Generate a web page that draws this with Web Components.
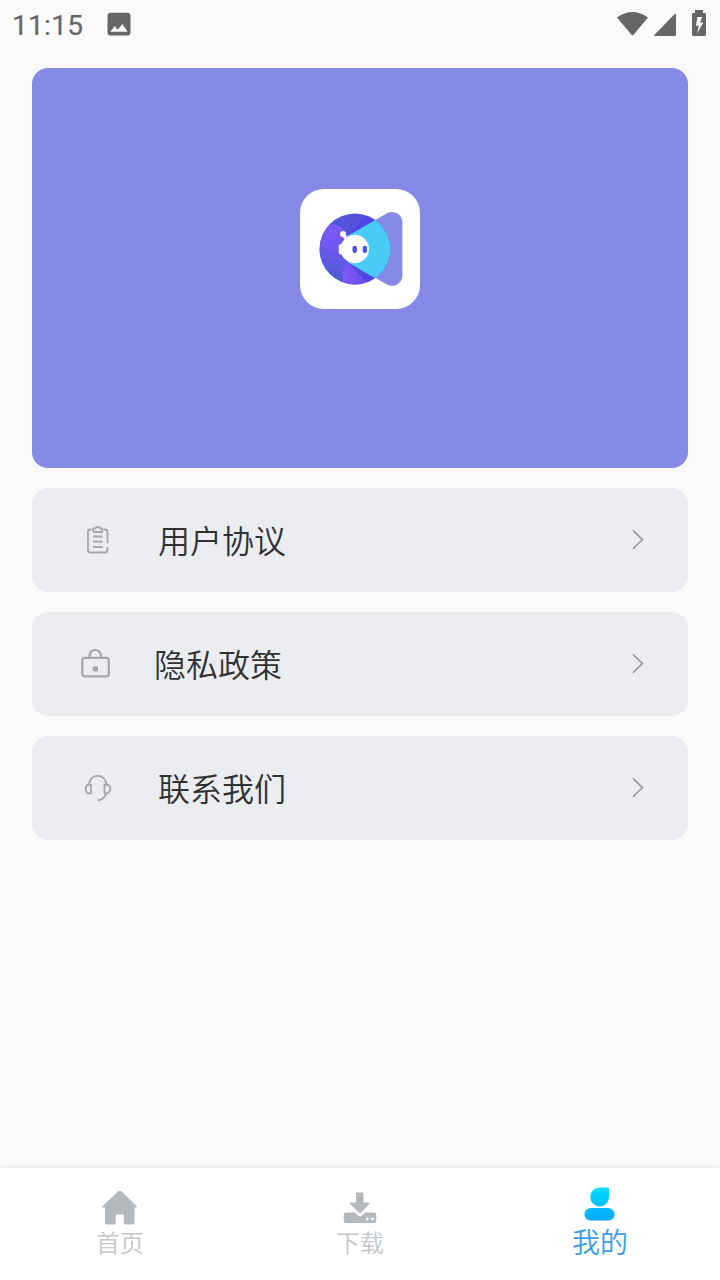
<!DOCTYPE html>
<html lang="zh-CN">
<head>
<meta charset="utf-8">
<meta name="viewport" content="width=device-width, initial-scale=1">
<title>我的</title>
<style>
  body {
    margin: 0;
    font-family: "Noto Sans CJK SC", sans-serif;
    font-weight: 350;
  }
</style>
</head>
<body>
<profile-page>
  <status-bar slot="status" time="11:15"></status-bar>
  <profile-banner></profile-banner>
  <menu-row icon="clipboard">用户协议</menu-row>
  <menu-row icon="lock">隐私政策</menu-row>
  <menu-row icon="headset">联系我们</menu-row>
  <tab-bar slot="tabs">
    <tab-item icon="home">首页</tab-item>
    <tab-item icon="download">下载</tab-item>
    <tab-item icon="user" active>我的</tab-item>
  </tab-bar>
</profile-page>

<script>
const makeTemplate = (html) => {
  const template = document.createElement("template");
  template.innerHTML = html;
  return template;
};

class BaseElement extends HTMLElement {
  constructor() {
    super();
    this.attachShadow({ mode: "open" });
    this.shadowRoot.appendChild(this.constructor.template.content.cloneNode(true));
  }
}

class ProfilePage extends BaseElement {
  static template = makeTemplate(`
    <style>
      :host {
        display: flex;
        flex-direction: column;
        height: 100vh;
        overflow: hidden;
        background: #fafafa;
      }

      main {
        flex: 1;
        display: flex;
        flex-direction: column;
        gap: 20px;
        padding: 20px 32px 0;
      }
    </style>
    <slot name="status"></slot>
    <main><slot></slot></main>
    <slot name="tabs"></slot>
  `);
}

class StatusBar extends BaseElement {
  static template = makeTemplate(`
    <style>
      :host {
        display: flex;
        align-items: center;
        box-sizing: border-box;
        height: 48px;
        padding: 0 12px 0 12px;
        color: #666;
      }

      .time {
        width: 71px;
        margin-top: 3px;
        font: 400 28px/32px Roboto, sans-serif;
        letter-spacing: 0.3px;
        -webkit-text-stroke: 0.2px currentColor;
      }

      svg {
        display: block;
        fill: currentColor;
      }

      .picture {
        margin-left: 24px;
      }

      .system {
        margin-left: auto;
      }
    </style>
    <span class="time"></span>
    <svg class="picture" width="24" height="24" viewBox="0 0 24 24">
      <path fill-rule="evenodd" d="M3.5.8h17a3 3 0 0 1 3 3v16.600a3 3 0 0 1-3 3h-17a3 3 0 0 1-3-3V3.800a3 3 0 0 1 3-3zM3.300 19.700h17.400l-5.400-7.700-4.500 5.800-3-3.700z"/>
    </svg>
    <svg class="system" width="92" height="48" viewBox="616 0 92 48">
      <path d="M617 17.400Q632.400 6.400 648 17.400L634 34.300Q632.500 36.600 631 34.300z"/>
      <path d="M676 14.500V34.500Q676 36 674.500 36H655Q653.300 36 654.500 34.800L674.500 14.300Q676 13 676 14.500z"/>
      <path fill-rule="evenodd" d="M695 10h8v3h1.700Q706 13 706 14.300V34.500Q706 36 704.500 36h-11Q692 36 692 34.500V14.300Q692 13 693.300 13H695zM697.400 17L696 25.800H698.800L697.200 33.500L703.200 22.500H700L702.300 17z"/>
    </svg>
  `);

  connectedCallback() {
    this.shadowRoot.querySelector(".time").textContent = this.getAttribute("time");
  }
}

class ProfileBanner extends BaseElement {
  static template = makeTemplate(`
    <style>
      :host {
        display: flex;
        align-items: center;
        justify-content: center;
        box-sizing: border-box;
        height: 400px;
        padding-bottom: 38px;
        background: #848ae6;
        border-radius: 16px;
      }

      svg {
        display: block;
        background: #fff;
        border-radius: 24px;
      }
    </style>
    <svg width="120" height="120" viewBox="0 0 120 120">
      <defs>
        <linearGradient id="ring" x1="0" y1="0" x2="1" y2="0">
          <stop offset="0" stop-color="#4a5cd4"/>
          <stop offset="0.500" stop-color="#5552de"/>
          <stop offset="1" stop-color="#5850de"/>
        </linearGradient>
        <linearGradient id="petal" x1="0.600" y1="0" x2="0.400" y2="1">
          <stop offset="0" stop-color="#7d58fa"/>
          <stop offset="0.350" stop-color="#7358f2"/>
          <stop offset="0.850" stop-color="#4a5cd2"/>
        </linearGradient>
        <linearGradient id="petal-low" x1="0" y1="0" x2="1" y2="0">
          <stop offset="0" stop-color="#8059fa"/>
          <stop offset="1" stop-color="#5b4be4"/>
        </linearGradient>
        <clipPath id="disc"><circle cx="55" cy="60" r="35.400"/></clipPath>
      </defs>
      <path fill="#848ae6" d="M48 46.800L87 24.300Q92.500 21.500 97.500 24.600Q102.400 27.800 102.400 34V86Q102.400 92 97.500 95.200Q92.500 98.200 87 95.600L48 73.500z"/>
      <g clip-path="url(#disc)">
        <path fill="url(#ring)" d="M19 24H91V96H19z"/>
        <path fill="url(#petal)" d="M18 37Q27 34 35 35.500Q44 38 48 47V73Q43 80 42.500 96H18z"/>
        <path fill="#5044e8" d="M48 47L66 26.500L76 31z"/>
        <path fill="url(#petal-low)" d="M47 73L76 89L65 96H43Q40.500 82 47 73z"/>
        <path fill="#5044e8" d="M48 73.500L66.500 93L76 89z"/>
        <path fill="#48cbf5" d="M48 46.800L80 28.300H92V92H80L48 73.500z"/>
      </g>
      <path fill="none" stroke="#fff" stroke-width="3.400" d="M43.300 45.500L47 51"/>
      <circle cx="43" cy="45" r="3" fill="#fff"/>
      <circle cx="54.800" cy="60" r="14.200" fill="#fff"/>
      <rect x="38.800" y="55" width="5" height="10.500" rx="2.300" fill="#fff"/>
      <rect x="52.500" y="56.700" width="4.400" height="7.200" rx="2.200" fill="#5150dc"/>
      <rect x="62.700" y="56.700" width="4.400" height="7.200" rx="2.200" fill="#5150dc"/>
    </svg>
  `);
}

// Each drawing uses a 32x32 box
const rowIcons = {
  clipboard: `
    <path d="M9.500 5.500H8.500Q6 5.500 6 8V26Q6 28.500 8.500 28.500H23Q25.500 28.500 25.500 26V23M25.500 19V8Q25.500 5.500 23 5.500H22"/>
    <path d="M11.800 8Q9.500 4.300 13 4.500Q13.500 3 15.800 3Q18 3 18.600 4.500Q22 4.300 19.800 8z"/>
    <path d="M11 12.500H20.500M11 17.600H20.500M11 23H20.500"/>`,
  lock: `
    <rect x="2.300" y="9.800" width="26.500" height="18.500" rx="2.500"/>
    <path d="M9.500 9.800V7.500Q10.500 2 15.200 2Q20 2 21 7.500V9.800"/>
    <circle cx="15.300" cy="20.900" r="1.400" stroke-width="2.600"/>
    <path d="M17.400 18.500V23.500" stroke-width="1"/>`,
  headset: `
    <path d="M6.800 13Q8 3.900 15.500 3.900Q23 3.900 24.800 13M24.500 20.800Q22.800 27.600 15.500 28.300"/>
    <path d="M9 12.700H7Q3.700 12.900 3.700 17Q3.700 21.100 7 21.400H9zM22.500 12.700H24.500Q28.300 13.200 28.300 17Q28.300 20.800 24.500 21.400H22.500z"/>`
};

class MenuRow extends BaseElement {
  static template = makeTemplate(`
    <style>
      :host {
        display: flex;
        align-items: center;
        box-sizing: border-box;
        height: 104px;
        padding: 0 44px 0 50px;
        background: #ecedf1;
        border-radius: 16px;
        color: #303133;
        font-size: 32px;
        line-height: 48px;
      }

      svg {
        display: block;
        fill: none;
        stroke: #a5a6a8;
      }

      .icon {
        width: 32px;
        height: 32px;
        margin-right: 44px;
        stroke-width: 1.800;
      }

      :host([icon="lock"]) {
        padding-left: 48px;
      }

      :host([icon="lock"]) .icon {
        margin-right: 42px;
        stroke-width: 2.200;
      }

      .label {
        flex: 1;
        padding-bottom: 2px;
      }

      .arrow {
        stroke: #909193;
        stroke-width: 1.500;
      }
    </style>
    <svg class="icon" viewBox="0 0 32 32"></svg>
    <span class="label"><slot></slot></span>
    <svg class="arrow" width="12" height="20" viewBox="0 0 12 20">
      <path d="M1 .4L10.500 9.600L1 18.800"/>
    </svg>
  `);

  connectedCallback() {
    this.shadowRoot.querySelector(".icon").innerHTML = rowIcons[this.getAttribute("icon")] || "";
  }
}

class TabBar extends BaseElement {
  static template = makeTemplate(`
    <style>
      :host {
        position: relative;
        display: grid;
        grid-template-columns: repeat(3, 1fr);
        height: 112px;
        background: #fff;
        box-shadow: 0 -1px 5px rgba(0, 0, 0, 0.08);
      }
    </style>
    <slot></slot>
  `);
}

const tabIcons = {
  home: `<path fill="#b5b9be" d="M18.300 3.300Q19.800 2 21.300 3.300L36.800 18.200Q37.800 19.500 35.800 19.500H34.600V34Q34.600 36.500 32.100 36.500H25Q23.800 36.500 23.800 35V28Q23.800 26.500 22.500 26.500H17.200Q15.700 26.500 15.700 28V35Q15.700 36.500 14.500 36.500H7.500Q5 36.500 5 34V19.500H3.500Q1.300 19.500 2.500 18.200z"/>`,
  download: `
    <path fill="#b5b9be" d="M17 4.500H22.300Q23.500 4.500 23.500 5.500V14.500H28.500Q30.800 14.500 29 16.300L21 24.800Q20 25.800 19 24.800L10.500 16.300Q8.800 14.500 11 14.500H16V5.500Q16 4.500 17 4.500z"/>
    <path fill="#b5b9be" fill-rule="evenodd" d="M6 24.500H15.300L18 27.400Q20 29.200 22 27.400L24.800 24.500H34Q36.300 24.500 36.300 26.800V32.700Q36.300 35 34 35H6Q3.700 35 3.700 32.700V26.800Q3.700 24.500 6 24.500zM27.300 29.600a1.400 1.400 0 1 0 0 2.800a1.400 1.400 0 1 0 0-2.800zM32.500 29.600a1.400 1.400 0 1 0 0 2.800a1.400 1.400 0 1 0 0-2.800z"/>`,
  user: `
    <defs>
      <linearGradient id="blue" gradientUnits="userSpaceOnUse" x1="0" y1="0" x2="0" y2="33">
        <stop offset="0" stop-color="#05dcfc"/>
        <stop offset="1" stop-color="#03a7fb"/>
      </linearGradient>
    </defs>
    <path fill="url(#blue)" d="M19.700-.4H28Q29-.4 29 .6V9A9.400 9.400 0 1 1 19.700-.4z"/>
    <rect fill="url(#blue)" x="4.500" y="20" width="30" height="12.600" rx="6.300"/>`
};

class TabItem extends BaseElement {
  static template = makeTemplate(`
    <style>
      :host {
        display: flex;
        flex-direction: column;
        align-items: center;
        padding-top: 20px;
        color: #c4c6c9;
        font-size: 24px;
        line-height: 36px;
      }

      :host([active]) {
        color: #3c9ce8;
        font-size: 28px;
        line-height: 42px;
      }

      svg {
        display: block;
        overflow: visible;
        width: 40px;
        height: 40px;
        margin-bottom: -4px;
      }

      :host([active]) svg {
        margin-bottom: -8px;
      }
    </style>
    <svg viewBox="0 0 40 40"></svg>
    <span><slot></slot></span>
  `);

  connectedCallback() {
    this.shadowRoot.querySelector("svg").innerHTML = tabIcons[this.getAttribute("icon")] || "";
  }
}

customElements.define("profile-page", ProfilePage);
customElements.define("status-bar", StatusBar);
customElements.define("profile-banner", ProfileBanner);
customElements.define("menu-row", MenuRow);
customElements.define("tab-bar", TabBar);
customElements.define("tab-item", TabItem);
</script>
</body>
</html>
